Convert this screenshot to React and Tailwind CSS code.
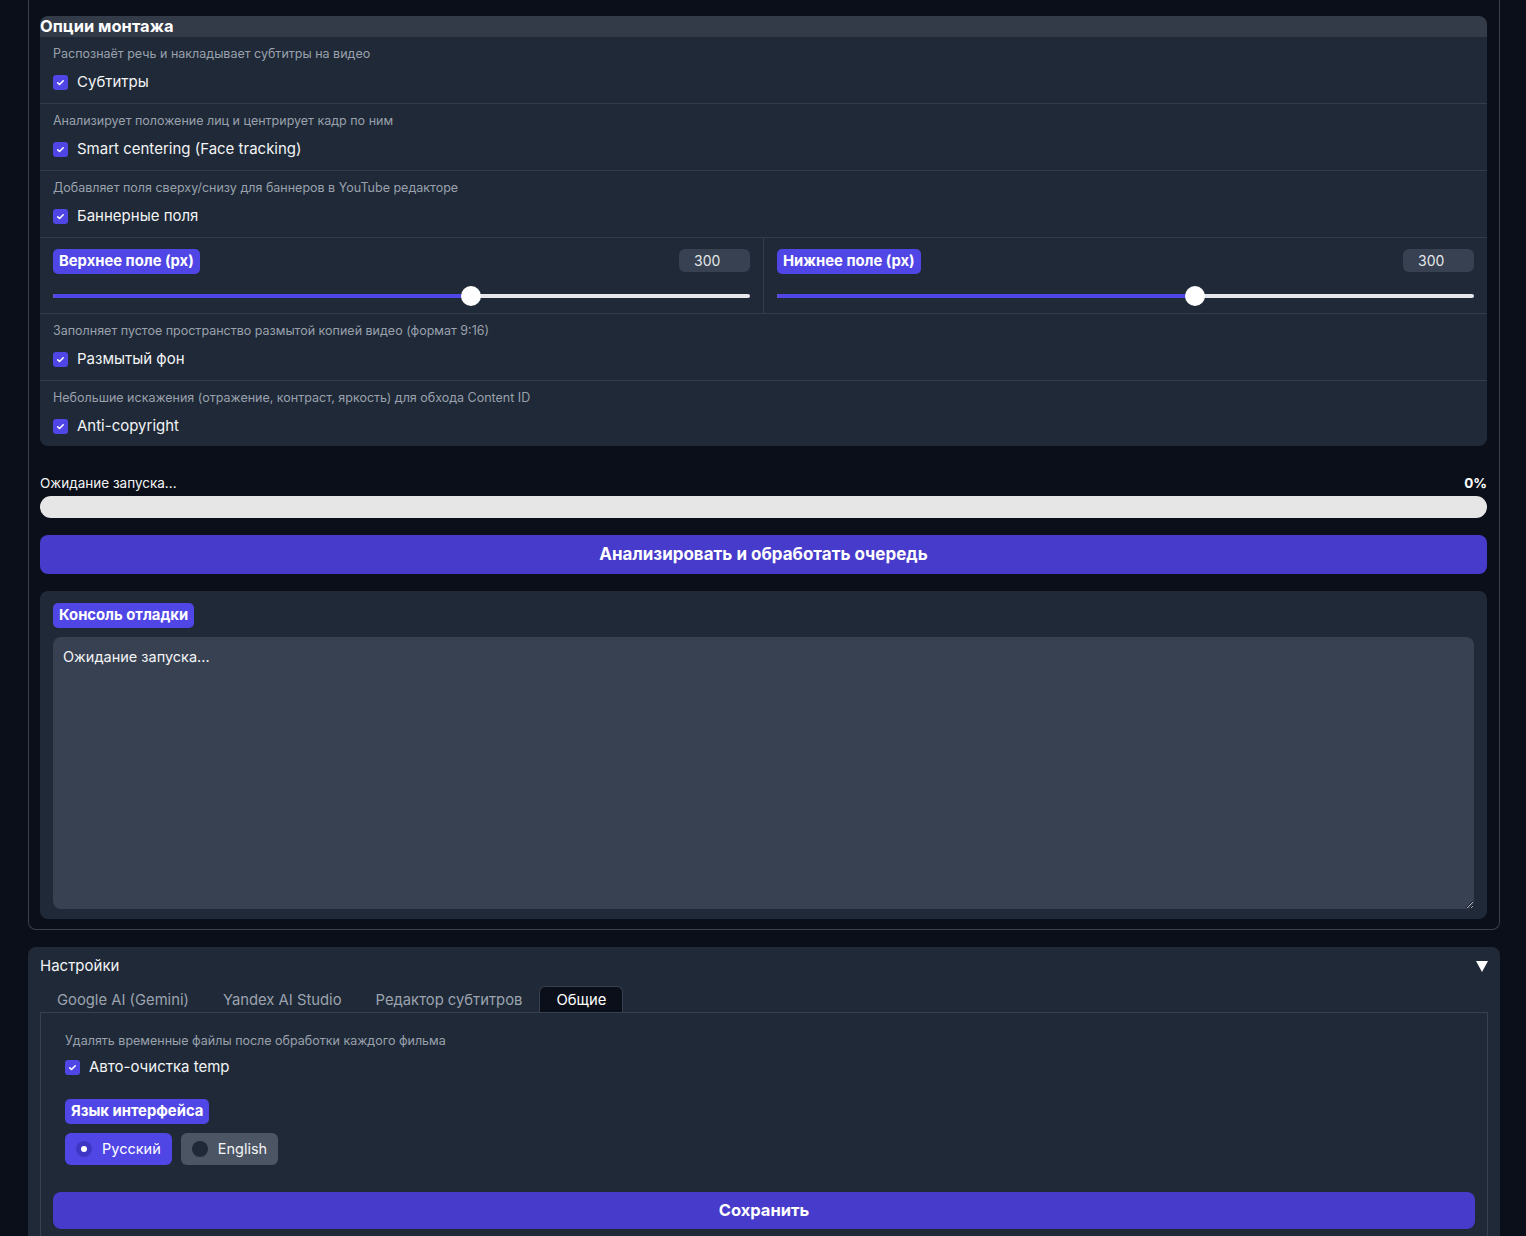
import { useState } from 'react'

const FONT = "font-['Inter','Noto_Sans',sans-serif]"

function Check({ checked = true }) {
  return (
    <span
      className={
        'flex h-[15px] w-[15px] shrink-0 items-center justify-center rounded-[3px] ' +
        (checked ? 'bg-[#4f46e5]' : 'border border-gray-500 bg-transparent')
      }
    >
      {checked ? (
        <svg viewBox="0 0 16 16" className="h-[11px] w-[11px]" fill="none">
          <path d="M4 8.5l2.6 2.5L12 5.5" stroke="white" strokeWidth="2.2" strokeLinecap="round" strokeLinejoin="round" />
        </svg>
      ) : null}
    </span>
  )
}

function OptionRow({ hint, label, last = false }) {
  return (
    <div className={'px-[13px] pt-[9px] ' + (last ? 'pb-[10px]' : 'pb-[11px] border-b border-[#343c4a]')}>
      <p className="h-4 text-[12.5px] leading-4 text-[#9aa1ad]">{hint}</p>
      <label className="mt-[10px] flex h-5 items-center gap-[9px] text-[15px] text-gray-100">
        <Check />
        <span>{label}</span>
      </label>
    </div>
  )
}

function Badge({ children }) {
  return (
    <span className="inline-flex h-[25px] items-center rounded-[5px] bg-[#4f46e5] px-[6px] text-[14.8px] font-bold text-white">
      {children}
    </span>
  )
}

function SliderField({ label, value, max = 500 }) {
  const pct = (value / max) * 100
  return (
    <div className="flex-1 px-[13px] pt-[11px] pb-[7px]">
      <div className="flex items-start justify-between">
        <Badge>{label}</Badge>
        <span className="flex h-[23px] w-[71px] items-center rounded-md bg-[#374151] pl-[15px] text-[14px] text-gray-200">
          {value}
        </span>
      </div>
      <div className="relative mt-3 h-5">
        <div className="absolute left-0 right-0 top-[8px] h-1 rounded-full bg-[#e5e7eb]" />
        <div className="absolute left-0 top-[8px] h-1 rounded-full bg-[#4f46e5]" style={{ width: pct + '%' }} />
        <div
          className="absolute top-0 h-5 w-5 -translate-x-1/2 rounded-full bg-white"
          style={{ left: pct + '%' }}
        />
      </div>
    </div>
  )
}

function Tab({ label, active }) {
  return (
    <button
      type="button"
      className={
        'h-[26px] rounded-t-md px-[16px] text-[14.8px] leading-[26px] ' +
        (active ? 'border border-b-0 border-[#374151] bg-[#0b0f19] text-white' : 'border border-transparent text-[#9ca3af]')
      }
    >
      {label}
    </button>
  )
}

function Radio({ label, active, onClick }) {
  return (
    <button
      type="button"
      onClick={onClick}
      className={
        'flex h-8 items-center gap-[10px] rounded-md px-[11px] text-[14.5px] ' +
        (active ? 'bg-[#4f46e5] text-white' : 'bg-[#4b5563] text-gray-100')
      }
    >
      <span className={'flex h-4 w-4 items-center justify-center rounded-full ' + (active ? 'bg-[#3f37c4]' : 'bg-[#1f2937]')}>
        {active ? <span className="h-[6px] w-[6px] rounded-full bg-white" /> : null}
      </span>
      {label}
    </button>
  )
}

export default function App() {
  const [lang, setLang] = useState('ru')

  return (
    <div className={'h-[1236px] overflow-hidden bg-[#0b0f19] text-gray-100 ' + FONT}>
      <div className="ml-[28px] mr-[26px]">
        {/* main panel */}
        <div className="rounded-b-lg border-x border-b border-[#3a404c] pl-[11px] pr-3 pt-4 pb-[10px]">
          <section className="overflow-hidden rounded-lg bg-[#1f2937]">
            <h2 className="h-[21px] rounded-t-lg bg-[#333b49] text-[16.5px] font-bold leading-[21px] text-white">
              Опции монтажа
            </h2>
            <OptionRow hint="Распознаёт речь и накладывает субтитры на видео" label="Субтитры" />
            <OptionRow hint="Анализирует положение лиц и центрирует кадр по ним" label="Smart centering (Face tracking)" />
            <OptionRow hint="Добавляет поля сверху/снизу для баннеров в YouTube редакторе" label="Баннерные поля" />
            <div className="flex border-b border-[#343c4a]">
              <SliderField label="Верхнее поле (px)" value={300} />
              <div className="w-px bg-[#343c4a]" />
              <SliderField label="Нижнее поле (px)" value={300} />
            </div>
            <OptionRow hint="Заполняет пустое пространство размытой копией видео (формат 9:16)" label="Размытый фон" />
            <OptionRow hint="Небольшие искажения (отражение, контраст, яркость) для обхода Content ID" label="Anti-copyright" last />
          </section>

          <div className="mt-[29px] flex h-4 items-center justify-between text-[13.5px] leading-4">
            <span className="text-gray-100">Ожидание запуска...</span>
            <span className="font-bold text-white">0%</span>
          </div>
          <div className="mt-[5px] h-[22px] rounded-full bg-[#e6e6e6]" />

          <button
            type="button"
            className="mt-[17px] flex h-[39px] w-full items-center justify-center rounded-lg bg-[#473bcb] text-[17px] font-bold text-white"
          >
            Анализировать и обработать очередь
          </button>

          <section className="mt-[17px] rounded-lg bg-[#1f2937] px-[13px] pt-[11px] pb-[10px]">
            <Badge>Консоль отладки</Badge>
            <textarea
              readOnly
              defaultValue="Ожидание запуска..."
              className="mt-[9px] block h-[272px] w-full rounded-lg bg-[#374151] px-[10px] py-[9px] text-[14.5px] text-gray-100 outline-none"
            />
          </section>
        </div>

        {/* settings */}
        <section className="mt-[17px] rounded-t-lg bg-[#1f2937] pl-3 pr-3">
          <div className="flex h-[39px] items-center justify-between">
            <span className="text-[15px] text-gray-100">Настройки</span>
            <svg viewBox="0 0 12 11" className="h-[11px] w-[12px]">
              <polygon points="0,0 12,0 6,11" fill="white" />
            </svg>
          </div>
          <div className="flex items-end">
            <Tab label="Google AI (Gemini)" />
            <Tab label="Yandex AI Studio" />
            <Tab label="Редактор субтитров" />
            <Tab label="Общие" active />
          </div>
          <div className="border border-b-0 border-[#374151] px-3 pt-5 pb-10">
            <div className="px-3">
              <p className="h-4 text-[12.5px] leading-4 text-[#9aa1ad]">
                Удалять временные файлы после обработки каждого фильма
              </p>
              <label className="mt-[9px] flex h-5 items-center gap-[9px] text-[15px] text-gray-100">
                <Check />
                <span>Авто-очистка temp</span>
              </label>
              <div className="mt-[21px] flex">
                <Badge>Язык интерфейса</Badge>
              </div>
              <div className="mt-[9px] flex gap-[9px]">
                <Radio label="Русский" active={lang === 'ru'} onClick={() => setLang('ru')} />
                <Radio label="English" active={lang === 'en'} onClick={() => setLang('en')} />
              </div>
            </div>
            <button
              type="button"
              className="mt-[27px] flex h-[37px] w-full items-center justify-center rounded-lg bg-[#473bcb] text-[16.5px] font-bold text-white"
            >
              Сохранить
            </button>
          </div>
        </section>
      </div>
    </div>
  )
}
